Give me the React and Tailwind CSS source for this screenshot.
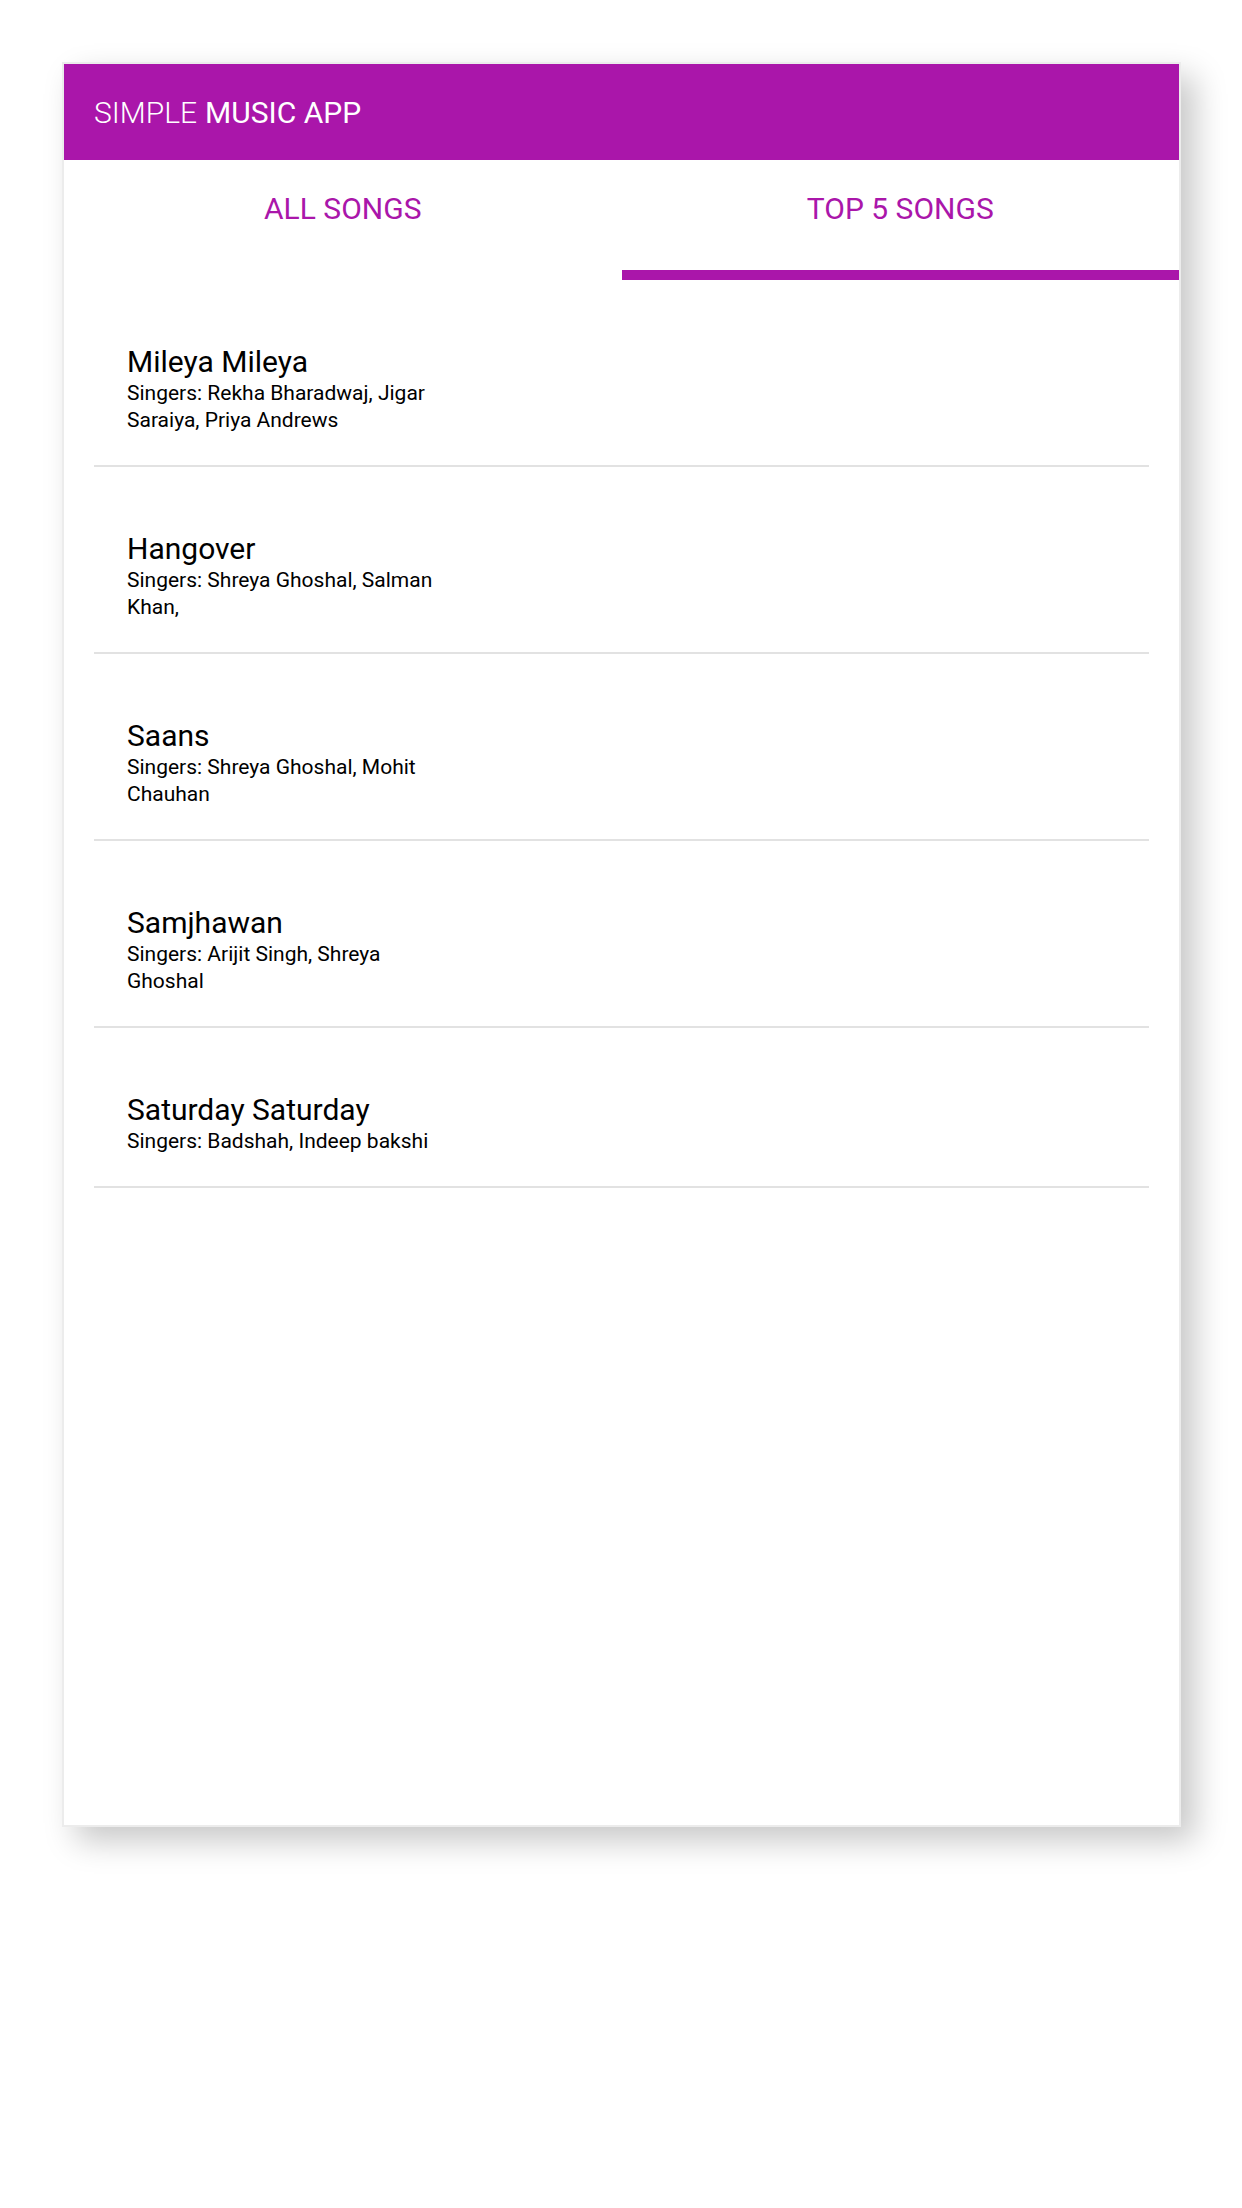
import React from "react";

const songs = [
  { title: "Mileya Mileya", singers: "Rekha Bharadwaj, Jigar Saraiya, Priya Andrews" },
  { title: "Hangover", singers: "Shreya Ghoshal, Salman Khan," },
  { title: "Saans", singers: "Shreya Ghoshal, Mohit Chauhan" },
  { title: "Samjhawan", singers: "Arijit Singh, Shreya Ghoshal" },
  { title: "Saturday Saturday", singers: "Badshah, Indeep bakshi" },
];

const Tab = ({ label, active }) => (
  <div className="flex-1 flex flex-col">
    <div className="h-[96px] flex items-center justify-center text-[30px] text-[#aa16aa]">
      {label}
    </div>
    <div className="h-[14px]" />
    <div className={active ? "h-[10px] bg-[#aa16aa]" : "h-[10px]"} />
  </div>
);

const SongRow = ({ song }) => (
  <div className="pt-[64px] pb-[31px] pl-[33px] border-b-2 border-[#e2e2e2]">
    <div className="text-[30px] leading-[36px] text-black">{song.title}</div>
    <div className="w-[320px] text-[21px] leading-[27px] text-black">
      Singers: {song.singers}
    </div>
  </div>
);

export default function App() {
  return (
    <div
      className="min-h-[2208px] bg-white pt-[62px] pl-[62px]"
      style={{ fontFamily: "Roboto, 'Noto Sans', sans-serif" }}
    >
      <div className="w-[1119px] h-[1765px] bg-white border-2 border-[#ececec] shadow-[14px_14px_30px_rgba(0,0,0,0.22)]">
        <div className="h-[96px] bg-[#aa16aa] flex items-center px-[30px] text-white text-[30px]">
          <span className="font-light">SIMPLE</span>
          <span className="ml-[8px]">MUSIC APP</span>
        </div>
        <div className="flex">
          <Tab label="ALL SONGS" />
          <Tab label="TOP 5 SONGS" active />
        </div>
        <div className="mx-[30px]">
          {songs.map((s) => (
            <SongRow key={s.title} song={s} />
          ))}
        </div>
      </div>
    </div>
  );
}
